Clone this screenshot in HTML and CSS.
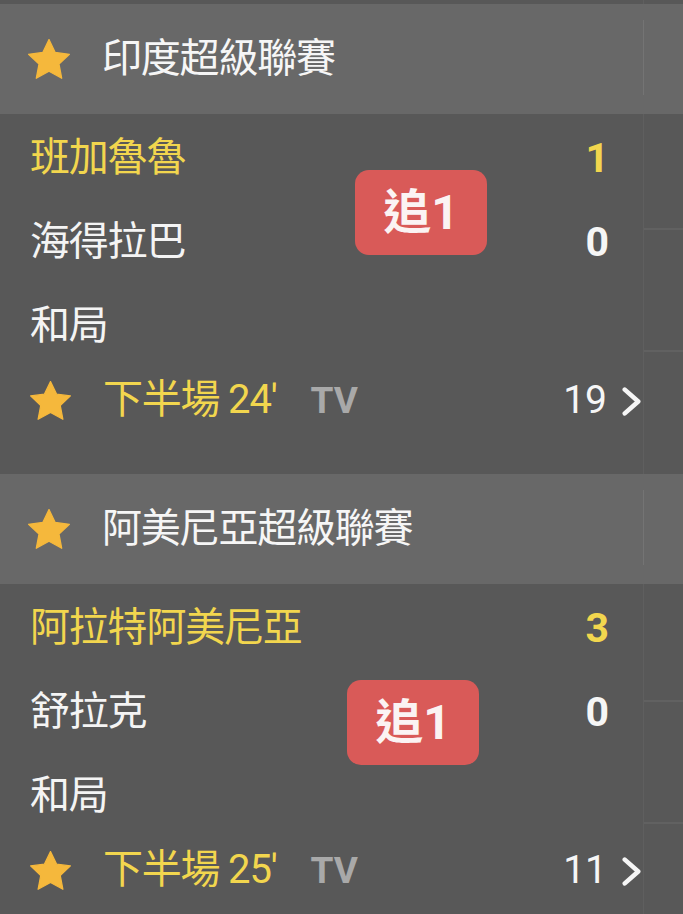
FILE: index.html
```html
<!DOCTYPE html>
<html lang="zh-Hant">
<head>
<meta charset="utf-8">
<title>賽事</title>
<link rel="stylesheet" href="styles.css">
</head>
<body>
<div class="top-strip"><div class="strip-main"></div><div class="strip-side"></div></div>

<section class="league">
  <header class="league-head">
    <div class="head-main">
      <svg class="star" viewBox="2.1 2 19.8 19"><path d="M12 2.2l2.95 6.2 6.75.85-4.95 4.65 1.3 6.75L12 17.35l-6.05 3.3 1.3-6.75-4.95-4.65 6.75-.85z"/></svg>
      <span class="league-name">印度超級聯賽</span>
    </div>
    <div class="head-side"></div>
  </header>
  <div class="league-body">
    <div class="matches">
      <div class="row team home"><span class="name">班加魯魯</span><span class="score">1</span></div>
      <div class="row team"><span class="name">海得拉巴</span><span class="score">0</span></div>
      <div class="row team"><span class="name">和局</span></div>
      <div class="row foot">
        <svg class="star" viewBox="2.1 2 19.8 19"><path d="M12 2.2l2.95 6.2 6.75.85-4.95 4.65 1.3 6.75L12 17.35l-6.05 3.3 1.3-6.75-4.95-4.65 6.75-.85z"/></svg>
        <span class="status">下半場 24'</span>
        <span class="tv">TV</span>
        <span class="count">19</span>
        <svg class="chev" viewBox="0 0 18 28"><path d="M2.5 2.5L15.5 14 2.5 25.5"/></svg>
      </div>
      <div class="badge badge-a">追1</div>
    </div>
    <div class="side">
      <div class="cell c1"></div>
      <div class="cell c2"></div>
      <div class="cell c3"></div>
    </div>
  </div>
</section>

<section class="league">
  <header class="league-head">
    <div class="head-main">
      <svg class="star" viewBox="2.1 2 19.8 19"><path d="M12 2.2l2.95 6.2 6.75.85-4.95 4.65 1.3 6.75L12 17.35l-6.05 3.3 1.3-6.75-4.95-4.65 6.75-.85z"/></svg>
      <span class="league-name">阿美尼亞超級聯賽</span>
    </div>
    <div class="head-side"></div>
  </header>
  <div class="league-body">
    <div class="matches">
      <div class="row team home"><span class="name">阿拉特阿美尼亞</span><span class="score">3</span></div>
      <div class="row team"><span class="name">舒拉克</span><span class="score">0</span></div>
      <div class="row team"><span class="name">和局</span></div>
      <div class="row foot">
        <svg class="star" viewBox="2.1 2 19.8 19"><path d="M12 2.2l2.95 6.2 6.75.85-4.95 4.65 1.3 6.75L12 17.35l-6.05 3.3 1.3-6.75-4.95-4.65 6.75-.85z"/></svg>
        <span class="status">下半場 25'</span>
        <span class="tv">TV</span>
        <span class="count">11</span>
        <svg class="chev" viewBox="0 0 18 28"><path d="M2.5 2.5L15.5 14 2.5 25.5"/></svg>
      </div>
      <div class="badge badge-b">追1</div>
    </div>
    <div class="side">
      <div class="cell c1 c1b"></div>
      <div class="cell c2"></div>
      <div class="cell c3"></div>
    </div>
  </div>
</section>
</body>
</html>
```
FILE: styles.css
```css
* { box-sizing: border-box; }
html, body {
  margin: 0;
  padding: 0;
  background: #585858;
  color: #f4f4f4;
  font-family: "Roboto", "Noto Sans CJK TC", sans-serif;
  overflow: hidden;
}
body { width: 683px; height: 914px; }

.top-strip { height: 4px; display: flex; background: #585858; }
.strip-main { width: 643px; }
.strip-side { flex: 1; border-left: 1px solid #5f5f5f; }

.league-head {
  height: 110px;
  background: #686868;
  display: flex;
}
.head-main {
  width: 643px;
  display: flex;
  align-items: center;
  padding-left: 28px;
}
.head-side {
  flex: 1;
  position: relative;
}
.head-side::before {
  content: "";
  position: absolute;
  left: 0;
  top: 16px;
  bottom: 19px;
  width: 1px;
  background: #747474;
}

.star {
  width: 42px;
  height: 40px;
  flex: none;
}
.star path {
  fill: #f5b83c;
  stroke: #f5b83c;
  stroke-width: 0.6;
  stroke-linejoin: round;
}
.league-name {
  margin-left: 32px;
  font-size: 40px;
  letter-spacing: -1.2px;
  line-height: 1;
  color: #f6f6f6;
}

.league-body {
  height: 360px;
  display: flex;
  background: #585858;
}
.matches {
  width: 643px;
  position: relative;
  padding: 2px 2px 0 30px;
}
.row {
  display: flex;
  align-items: center;
}
.team {
  height: 84px;
}
.name {
  flex: 1;
  font-size: 40px;
  letter-spacing: -1.2px;
  line-height: 1;
  color: #f4f4f4;
}
.home .name, .home .score { color: #f2d64e; }
.score {
  font-size: 41px;
  font-weight: 700;
  line-height: 1;
  margin-right: 32px;
  color: #f6f6f6;
}
.foot {
  height: 64px;
}
.foot .star {
  width: 41px;
  height: 39px;
}
.status {
  margin-left: 32px;
  font-size: 40px;
  letter-spacing: -1.2px;
  line-height: 1;
  color: #f2d64e;
}
.tv {
  margin-left: 34px;
  font-size: 37px;
  font-weight: 700;
  color: #a9a9a9;
  line-height: 1;
  flex: 1;
}
.count {
  font-size: 39px;
  line-height: 1;
  color: #f6f6f6;
}
.chev {
  width: 19px;
  height: 29px;
  margin-left: 15px;
  margin-top: 2px;
}
.chev path {
  fill: none;
  stroke: #f6f6f6;
  stroke-width: 4.4;
  stroke-linecap: round;
  stroke-linejoin: round;
}

.badge {
  position: absolute;
  width: 132px;
  height: 85px;
  border-radius: 14px;
  background: #d95a58;
  color: #fbf3f3;
  font-weight: 700;
  font-size: 48px;
  display: flex;
  align-items: center;
  justify-content: center;
  line-height: 1;
}
.badge-a { left: 355px; top: 56px; }
.badge-b { left: 347px; top: 96px; }

.side {
  flex: 1;
  border-left: 1px solid #5f5f5f;
  display: flex;
  flex-direction: column;
}
.cell { border-bottom: 2px solid #616161; }
.c1 { height: 116px; }
.c1b { height: 118px; }
.c2 { height: 122px; }
.c3 { flex: 1; border-bottom: none; }
```
